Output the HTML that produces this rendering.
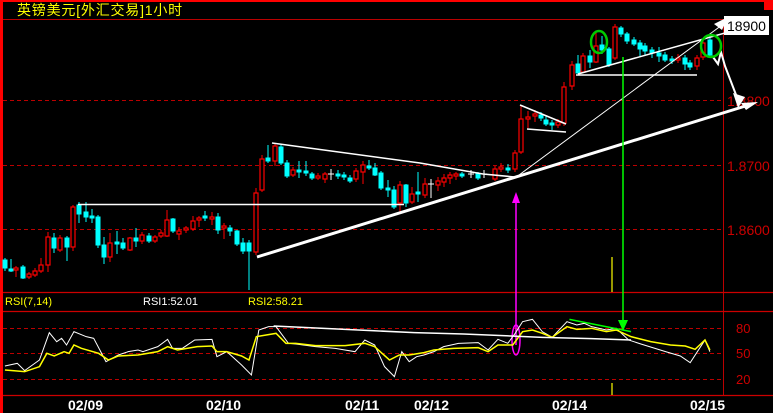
<!DOCTYPE html>
<html><head><meta charset="utf-8"><style>
html,body{margin:0;padding:0;background:#000;width:773px;height:413px;overflow:hidden}
svg{display:block}
.r{fill:#000;stroke:#f00;stroke-width:1.2}
.c{fill:#0ff;stroke:#0ff;stroke-width:1}
.wr{stroke:#f00;stroke-width:1}
.wc{stroke:#0ff;stroke-width:1}
text{font-family:"Liberation Sans","Noto Sans CJK SC",sans-serif}
</style></head><body>
<svg width="773" height="413" viewBox="0 0 773 413" xmlns="http://www.w3.org/2000/svg">
<rect width="773" height="413" fill="#000"/>
<rect x="0" y="0" width="773" height="2" fill="#f00"/>
<rect x="0" y="0" width="3" height="413" fill="#f00"/>
<rect x="764" y="0" width="9" height="10" fill="#f00"/>
<text x="17" y="15" fill="#ff0" font-size="14" letter-spacing="0.8" font-family="'WenQuanYi Zen Hei','Noto Sans CJK SC',sans-serif">英镑美元[外汇交易]1小时</text>
<line x1="3" y1="19.5" x2="723" y2="19.5" stroke="#b00" stroke-width="1"/>
<line x1="723.5" y1="19" x2="723.5" y2="396" stroke="#b00" stroke-width="1"/>
<g stroke="#b00" stroke-width="1" stroke-dasharray="4,3">
<line x1="3" y1="100.5" x2="723" y2="100.5"/>
<line x1="3" y1="165.5" x2="723" y2="165.5"/>
<line x1="3" y1="229.5" x2="723" y2="229.5"/>
<line x1="3" y1="328.5" x2="723" y2="328.5"/>
<line x1="3" y1="353.5" x2="723" y2="353.5"/>
<line x1="3" y1="379.5" x2="723" y2="379.5"/>
</g>
<g stroke="#c00" stroke-width="1.2">
<line x1="3" y1="292.5" x2="773" y2="292.5"/>
<line x1="3" y1="311.5" x2="773" y2="311.5"/>
<line x1="3" y1="395.5" x2="773" y2="395.5"/>
</g>
<g fill="#c00" font-size="14">
<text x="727" y="106">1.8800</text>
<text x="727" y="171">1.8700</text>
<text x="727" y="235">1.8600</text>
<text x="736" y="333" font-size="13">80</text>
<text x="736" y="358" font-size="13">50</text>
<text x="736" y="384" font-size="13">20</text>
</g>
<rect x="724" y="16" width="45" height="19" fill="#fff"/>
<text x="727" y="31" fill="#000" font-size="14">18900</text>

<g>
<line class="wc" x1="5" y1="258" x2="5" y2="271"/><rect class="c" x="3" y="260" width="4" height="8"/>
<line class="wc" x1="11" y1="259" x2="11" y2="272"/><rect class="c" x="9" y="269" width="4" height="2"/>
<line class="wr" x1="16" y1="266" x2="16" y2="277"/><rect class="r" x="14" y="268" width="4" height="2"/>
<line class="wc" x1="23" y1="265" x2="23" y2="279"/><rect class="c" x="21" y="267" width="4" height="11"/>
<line class="wr" x1="29" y1="272" x2="29" y2="279"/><rect class="r" x="27" y="274" width="4" height="3"/>
<line class="wr" x1="35" y1="268" x2="35" y2="277"/><rect class="r" x="33" y="271" width="4" height="4"/>
<line class="wr" x1="41" y1="258" x2="41" y2="273"/><rect class="r" x="39" y="265" width="4" height="6"/>
<line class="wr" x1="48" y1="232" x2="48" y2="272"/><rect class="r" x="46" y="237" width="4" height="28"/>
<line class="wc" x1="54" y1="233" x2="54" y2="253"/><rect class="c" x="52" y="238" width="4" height="10"/>
<line class="wr" x1="60" y1="235" x2="60" y2="252"/><rect class="r" x="58" y="238" width="4" height="12"/>
<line class="wc" x1="67" y1="236" x2="67" y2="261"/><rect class="c" x="65" y="238" width="4" height="9"/>
<line class="wr" x1="73" y1="205" x2="73" y2="251"/><rect class="r" x="71" y="207" width="4" height="40"/>
<line class="wc" x1="79" y1="202" x2="79" y2="223"/><rect class="c" x="77" y="205" width="4" height="9"/>
<line class="wc" x1="86" y1="202" x2="86" y2="222"/><rect class="c" x="84" y="212" width="4" height="5"/>
<line class="wc" x1="92" y1="209" x2="92" y2="223"/><rect class="c" x="90" y="216" width="4" height="2"/>
<line class="wc" x1="98" y1="215" x2="98" y2="248"/><rect class="c" x="96" y="217" width="4" height="28"/>
<line class="wc" x1="104" y1="237" x2="104" y2="264"/><rect class="c" x="102" y="245" width="4" height="12"/>
<line class="wr" x1="110" y1="233" x2="110" y2="262"/><rect class="r" x="108" y="243" width="4" height="14"/>
<line class="wc" x1="117" y1="231" x2="117" y2="254"/><rect class="c" x="115" y="242" width="4" height="2"/>
<line class="wc" x1="123" y1="238" x2="123" y2="250"/><rect class="c" x="121" y="243" width="4" height="5"/>
<line class="wr" x1="130" y1="237" x2="130" y2="251"/><rect class="r" x="128" y="238" width="4" height="12"/>
<line class="wc" x1="136" y1="228" x2="136" y2="247"/><rect class="c" x="134" y="238" width="4" height="3"/>
<line class="wr" x1="142" y1="232" x2="142" y2="244"/><rect class="r" x="140" y="235" width="4" height="6"/>
<line class="wc" x1="149" y1="233" x2="149" y2="243"/><rect class="c" x="147" y="236" width="4" height="5"/>
<line class="wr" x1="155" y1="235" x2="155" y2="243"/><rect class="r" x="153" y="237" width="4" height="4"/>
<line class="wr" x1="161" y1="230" x2="161" y2="238"/><rect class="r" x="159" y="233" width="4" height="3"/>
<line class="wr" x1="167" y1="210" x2="167" y2="237"/><rect class="r" x="165" y="220" width="4" height="16"/>
<line class="wc" x1="173" y1="218" x2="173" y2="233"/><rect class="c" x="171" y="219" width="4" height="12"/>
<line class="wr" x1="179" y1="227" x2="179" y2="240"/><rect class="r" x="177" y="231" width="4" height="3"/>
<line class="wr" x1="186" y1="226" x2="186" y2="233"/><rect class="r" x="184" y="228" width="4" height="2"/>
<line class="wr" x1="193" y1="216" x2="193" y2="231"/><rect class="r" x="191" y="221" width="4" height="8"/>
<line class="wr" x1="199" y1="216" x2="199" y2="227"/><rect class="r" x="197" y="218" width="4" height="2"/>
<line class="wc" x1="205" y1="211" x2="205" y2="221"/><rect class="c" x="203" y="216" width="4" height="2"/>
<line class="wr" x1="212" y1="212" x2="212" y2="225"/><rect class="r" x="210" y="217" width="4" height="2"/>
<line class="wc" x1="218" y1="213" x2="218" y2="234"/><rect class="c" x="216" y="217" width="4" height="13"/>
<line class="wr" x1="224" y1="223" x2="224" y2="239"/><rect class="r" x="222" y="226" width="4" height="2"/>
<line class="wc" x1="230" y1="225" x2="230" y2="236"/><rect class="c" x="228" y="228" width="4" height="3"/>
<line class="wc" x1="237" y1="230" x2="237" y2="246"/><rect class="c" x="235" y="231" width="4" height="13"/>
<line class="wc" x1="243" y1="238" x2="243" y2="254"/><rect class="c" x="241" y="243" width="4" height="8"/>
<line class="wc" x1="249" y1="240" x2="249" y2="290"/><rect class="c" x="247" y="243" width="4" height="8"/>
<line class="wr" x1="256" y1="188" x2="256" y2="255"/><rect class="r" x="254" y="193" width="4" height="59"/>
<line class="wr" x1="262" y1="155" x2="262" y2="192"/><rect class="r" x="260" y="159" width="4" height="31"/>
<line class="wc" x1="268" y1="145" x2="268" y2="163"/><rect class="c" x="266" y="158" width="4" height="3"/>
<line class="wr" x1="275" y1="143" x2="275" y2="166"/><rect class="r" x="273" y="146" width="4" height="15"/>
<line class="wc" x1="281" y1="145" x2="281" y2="165"/><rect class="c" x="279" y="147" width="4" height="16"/>
<line class="wc" x1="287" y1="160" x2="287" y2="178"/><rect class="c" x="285" y="163" width="4" height="13"/>
<line class="wr" x1="293" y1="167" x2="293" y2="177"/><rect class="r" x="291" y="170" width="4" height="5"/>
<line class="wc" x1="299" y1="161" x2="299" y2="178"/><rect class="c" x="297" y="170" width="4" height="2"/>
<line class="wc" x1="306" y1="161" x2="306" y2="176"/><rect class="c" x="304" y="171" width="4" height="2"/>
<line class="wc" x1="312" y1="172" x2="312" y2="180"/><rect class="c" x="310" y="174" width="4" height="4"/>
<line class="wr" x1="318" y1="173" x2="318" y2="180"/><rect class="r" x="316" y="176" width="4" height="2"/>
<line class="wr" x1="325" y1="172" x2="325" y2="183"/><rect class="r" x="323" y="174" width="4" height="5"/>
<line stroke="#fff" x1="331" y1="169" x2="331" y2="180"/><line stroke="#fff" x1="328" y1="174" x2="334" y2="174"/>
<line class="wc" x1="338" y1="170" x2="338" y2="179"/><rect class="c" x="336" y="174" width="4" height="2"/>
<line class="wc" x1="344" y1="172" x2="344" y2="180"/><rect class="c" x="342" y="175" width="4" height="2"/>
<line class="wc" x1="350" y1="175" x2="350" y2="183"/><rect class="c" x="348" y="178" width="4" height="3"/>
<line class="wr" x1="356" y1="168" x2="356" y2="182"/><rect class="r" x="354" y="171" width="4" height="8"/>
<line class="wr" x1="363" y1="161" x2="363" y2="184"/><rect class="r" x="361" y="165" width="4" height="7"/>
<line class="wc" x1="369" y1="160" x2="369" y2="170"/><rect class="c" x="367" y="166" width="4" height="2"/>
<line class="wc" x1="375" y1="163" x2="375" y2="176"/><rect class="c" x="373" y="168" width="4" height="7"/>
<line class="wc" x1="381" y1="171" x2="381" y2="190"/><rect class="c" x="379" y="173" width="4" height="15"/>
<line class="wc" x1="388" y1="180" x2="388" y2="197"/><rect class="c" x="386" y="188" width="4" height="2"/>
<line class="wc" x1="394" y1="186" x2="394" y2="209"/><rect class="c" x="392" y="190" width="4" height="17"/>
<line class="wr" x1="400" y1="181" x2="400" y2="213"/><rect class="r" x="398" y="185" width="4" height="18"/>
<line class="wc" x1="406" y1="184" x2="406" y2="207"/><rect class="c" x="404" y="185" width="4" height="18"/>
<line class="wr" x1="412" y1="187" x2="412" y2="204"/><rect class="r" x="410" y="194" width="4" height="8"/>
<line class="wc" x1="418" y1="172" x2="418" y2="202"/><rect class="c" x="416" y="192" width="4" height="2"/>
<line class="wr" x1="425" y1="178" x2="425" y2="198"/><rect class="r" x="423" y="184" width="4" height="11"/>
<line stroke="#fff" x1="431" y1="179" x2="431" y2="198"/><line stroke="#fff" x1="428" y1="184" x2="434" y2="184"/>
<line class="wr" x1="438" y1="177" x2="438" y2="191"/><rect class="r" x="436" y="181" width="4" height="4"/>
<line class="wr" x1="444" y1="174" x2="444" y2="187"/><rect class="r" x="442" y="178" width="4" height="4"/>
<line class="wr" x1="450" y1="172" x2="450" y2="184"/><rect class="r" x="448" y="175" width="4" height="3"/>
<line class="wr" x1="456" y1="172" x2="456" y2="180"/><rect class="r" x="454" y="174" width="4" height="2"/>
<line class="wc" x1="462" y1="172" x2="462" y2="178"/><rect class="c" x="460" y="174" width="4" height="2"/>
<line stroke="#fff" x1="471" y1="170" x2="471" y2="178"/><line stroke="#fff" x1="468" y1="174" x2="474" y2="174"/>
<line class="wc" x1="478" y1="172" x2="478" y2="180"/><rect class="c" x="476" y="174" width="4" height="4"/>
<line stroke="#fff" x1="484" y1="170" x2="484" y2="178"/><line stroke="#fff" x1="481" y1="174" x2="487" y2="174"/>
<line class="wr" x1="495" y1="166" x2="495" y2="181"/><rect class="r" x="493" y="169" width="4" height="10"/>
<line class="wr" x1="501" y1="163" x2="501" y2="172"/><rect class="r" x="499" y="167" width="4" height="2"/>
<line class="wc" x1="508" y1="164" x2="508" y2="173"/><rect class="c" x="506" y="168" width="4" height="2"/>
<line class="wr" x1="515" y1="150" x2="515" y2="172"/><rect class="r" x="513" y="153" width="4" height="16"/>
<line class="wr" x1="521" y1="105" x2="521" y2="154"/><rect class="r" x="519" y="119" width="4" height="33"/>
<line class="wr" x1="528" y1="111" x2="528" y2="128"/><rect class="r" x="526" y="117" width="4" height="2"/>
<line class="wr" x1="535" y1="110" x2="535" y2="122"/><rect class="r" x="533" y="114" width="4" height="2"/>
<line class="wc" x1="541" y1="112" x2="541" y2="121"/><rect class="c" x="539" y="115" width="4" height="3"/>
<line class="wc" x1="546" y1="116" x2="546" y2="126"/><rect class="c" x="544" y="120" width="4" height="4"/>
<line class="wc" x1="552" y1="120" x2="552" y2="130"/><rect class="c" x="550" y="123" width="4" height="2"/>
<line class="wr" x1="558" y1="119" x2="558" y2="128"/><rect class="r" x="556" y="122" width="4" height="3"/>
<line class="wr" x1="564" y1="82" x2="564" y2="126"/><rect class="r" x="562" y="87" width="4" height="36"/>
<line class="wr" x1="572" y1="61" x2="572" y2="90"/><rect class="r" x="570" y="65" width="4" height="21"/>
<line class="wc" x1="578" y1="55" x2="578" y2="74"/><rect class="c" x="576" y="64" width="4" height="9"/>
<line class="wr" x1="583" y1="53" x2="583" y2="73"/><rect class="r" x="581" y="56" width="4" height="16"/>
<line class="wc" x1="590" y1="50" x2="590" y2="68"/><rect class="c" x="588" y="56" width="4" height="6"/>
<line class="wr" x1="596" y1="32" x2="596" y2="63"/><rect class="r" x="594" y="46" width="4" height="16"/>
<line class="wc" x1="602" y1="36" x2="602" y2="54"/><rect class="c" x="600" y="45" width="4" height="5"/>
<line class="wc" x1="609" y1="47" x2="609" y2="67"/><rect class="c" x="607" y="49" width="4" height="16"/>
<line class="wr" x1="615" y1="24" x2="615" y2="60"/><rect class="r" x="613" y="27" width="4" height="31"/>
<line class="wc" x1="621" y1="26" x2="621" y2="37"/><rect class="c" x="619" y="28" width="4" height="6"/>
<line class="wc" x1="627" y1="32" x2="627" y2="44"/><rect class="c" x="625" y="34" width="4" height="7"/>
<line class="wc" x1="634" y1="37" x2="634" y2="46"/><rect class="c" x="632" y="40" width="4" height="4"/>
<line class="wc" x1="640" y1="40" x2="640" y2="56"/><rect class="c" x="638" y="43" width="4" height="6"/>
<line class="wc" x1="645" y1="43" x2="645" y2="56"/><rect class="c" x="643" y="46" width="4" height="5"/>
<line class="wc" x1="652" y1="47" x2="652" y2="58"/><rect class="c" x="650" y="50" width="4" height="3"/>
<line class="wc" x1="659" y1="47" x2="659" y2="62"/><rect class="c" x="657" y="53" width="4" height="3"/>
<line class="wc" x1="665" y1="52" x2="665" y2="62"/><rect class="c" x="663" y="55" width="4" height="5"/>
<line class="wc" x1="672" y1="56" x2="672" y2="64"/><rect class="c" x="670" y="59" width="4" height="2"/>
<line class="wr" x1="678" y1="54" x2="678" y2="63"/><rect class="r" x="676" y="58" width="4" height="2"/>
<line class="wc" x1="685" y1="55" x2="685" y2="70"/><rect class="c" x="683" y="58" width="4" height="6"/>
<line class="wc" x1="690" y1="60" x2="690" y2="70"/><rect class="c" x="688" y="63" width="4" height="4"/>
<line class="wr" x1="697" y1="55" x2="697" y2="70"/><rect class="r" x="695" y="58" width="4" height="8"/>
<line class="wr" x1="703" y1="40" x2="703" y2="60"/><rect class="r" x="701" y="43" width="4" height="14"/>
<line class="wc" x1="710" y1="38" x2="710" y2="57"/><rect class="c" x="708" y="40" width="4" height="15"/>
</g>

<g stroke="#fff" fill="none">
<line x1="78" y1="204.5" x2="404" y2="204.5" stroke-width="1.5"/>
<polyline points="272,143 420,163 483,174 515,177" stroke-width="1.5"/>
<line x1="257" y1="257" x2="752" y2="104" stroke-width="3"/>
<line x1="515" y1="178" x2="722" y2="25" stroke-width="1"/>
<line x1="578" y1="74" x2="725" y2="33" stroke-width="1.5"/>
<line x1="576" y1="75" x2="697" y2="75" stroke-width="1.5"/>
<line x1="520" y1="105" x2="566" y2="124" stroke-width="1.5"/>
<line x1="527" y1="129" x2="566" y2="132" stroke-width="1.5"/>
<polyline points="713,57 718,64 721,52 725,66 738,100" stroke-width="2"/>
</g>
<g fill="#fff">
<polygon points="728,17 714,24 722,30"/>
<polygon points="758,102 741,103 746,110"/>
<polygon points="733,93 745,97 738,108"/>
</g>
<g fill="none" stroke="#0c0" stroke-width="2.5">
<ellipse cx="599" cy="42" rx="8" ry="11"/>
<ellipse cx="711" cy="46" rx="10" ry="11"/>
</g>
<line x1="623" y1="57" x2="623" y2="325" stroke="#0f0" stroke-width="1.5"/>
<polygon points="618,320 628,320 623,331" fill="#0f0"/>
<line x1="516" y1="203" x2="516" y2="345" stroke="#f0f" stroke-width="1.5"/>
<polygon points="516,192 512,203 520,203" fill="#f0f"/>
<ellipse cx="516" cy="340" rx="4" ry="15" fill="none" stroke="#f0f" stroke-width="1.5"/>
<line x1="612" y1="257" x2="612" y2="292" stroke="#ff0" stroke-width="1.2"/>
<line x1="612" y1="383" x2="612" y2="395" stroke="#ff0" stroke-width="1.2"/>

<text x="5" y="305" fill="#ff0" font-size="11">RSI(7,14)</text>
<text x="143" y="305" fill="#fff" font-size="11">RSI1:52.01</text>
<text x="248" y="305" fill="#ff0" font-size="11">RSI2:58.21</text>
<g transform="translate(0,280) scale(0.493,0.3333)" fill="none">
<polyline vector-effect="non-scaling-stroke" stroke="#fff" stroke-width="1" points="10,258 35,250 50,272 80,240 100,158 115,185 125,175 135,195 150,155 175,170 190,175 215,245 240,225 260,215 280,210 290,215 320,200 340,178 350,205 370,205 395,180 430,178 440,230 460,215 490,255 510,285 525,150 545,140 560,140 585,190 600,192 640,200 680,205 720,215 740,180 760,195 780,260 800,290 815,215 830,245 845,230 860,225 880,215 900,200 930,190 970,188 990,210 1010,178 1030,190 1045,160 1060,125 1080,118 1100,155 1120,172 1150,125 1170,135 1185,130 1200,140 1230,150 1250,145 1275,180 1300,192 1350,215 1380,228 1400,248 1430,180 1440,215"/>
<polyline vector-effect="non-scaling-stroke" stroke="#ff0" stroke-width="1.5" points="10,270 50,275 80,260 95,220 110,228 130,215 140,220 150,195 165,205 200,220 220,240 240,228 280,225 320,215 340,200 360,210 400,200 430,198 440,215 460,215 490,228 505,240 520,170 540,165 560,160 580,190 600,190 640,197 700,197 740,190 760,200 790,240 810,225 830,225 860,218 880,210 920,205 970,203 990,215 1010,195 1040,195 1060,155 1080,150 1100,160 1120,172 1150,140 1170,148 1200,145 1230,155 1250,150 1280,170 1320,185 1360,195 1390,198 1410,208 1430,180 1440,210"/>
<polyline vector-effect="non-scaling-stroke" stroke="#fff" stroke-width="1.5" points="555,138 700,148 840,158 940,162 1100,172 1200,176 1280,180"/>
<line vector-effect="non-scaling-stroke" stroke="#0f0" stroke-width="1.5" x1="1155" y1="118" x2="1280" y2="155"/>
</g>
<g fill="#fff" font-size="14" font-weight="bold" font-family="'Liberation Mono',monospace">
<text x="68" y="410">02/09</text>
<text x="206" y="410">02/10</text>
<text x="345" y="410">02/11</text>
<text x="414" y="410">02/12</text>
<text x="552" y="410">02/14</text>
<text x="690" y="410">02/15</text>
</g>
</svg>
</body></html>
